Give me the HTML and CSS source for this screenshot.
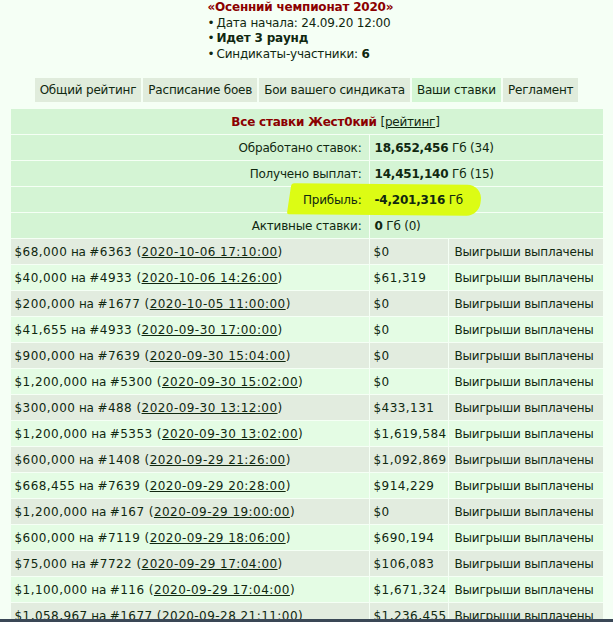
FILE: index.html
```html
<!DOCTYPE html>
<html lang="ru">
<head>
    <meta charset="UTF-8">
    <title>Ваши ставки</title>
    <link rel="stylesheet" href="styles.css">
</head>
<body>
    <div class="page">
        <div class="champ">
            <div class="champ-title">«Осенний чемпионат 2020»</div>
            <ul class="champ-info">
                <li>Дата начала: 24.09.20 12:00</li>
                <li><b>Идет 3 раунд</b></li>
                <li>Синдикаты-участники: <b>6</b></li>
            </ul>
        </div>

        <div class="tabs">
            <a class="tab">Общий рейтинг</a>
            <a class="tab">Расписание боев</a>
            <a class="tab">Бои вашего синдиката</a>
            <a class="tab active">Ваши ставки</a>
            <a class="tab">Регламент</a>
        </div>

        <table class="bets">
            <colgroup>
                <col class="c1">
                <col class="c2">
                <col class="c3">
            </colgroup>
            <tr class="head">
                <td colspan="3"><span class="owner">Все ставки Жест0кий</span> [<a href="#">рейтинг</a>]</td>
            </tr>
            <tr class="sum">
                <td class="label">Обработано ставок:</td>
                <td colspan="2"><b>18,652,456</b> Гб (34)</td>
            </tr>
            <tr class="sum">
                <td class="label">Получено выплат:</td>
                <td colspan="2"><b>14,451,140</b> Гб (15)</td>
            </tr>
            <tr class="sum profit">
                <td class="label"><span class="mark-wrap"><span class="marker"></span><span class="over">Прибыль:</span></span></td>
                <td colspan="2"><span class="over"><b>-4,201,316</b> Гб</span></td>
            </tr>
            <tr class="sum">
                <td class="label">Активные ставки:</td>
                <td colspan="2"><b>0</b> Гб (0)</td>
            </tr>
            <tbody id="bet-rows"></tbody>
        </table>
    </div>
    <div class="taskbar"></div>

    <script>
        const bets = [
            ['$68,000', '6363', '2020-10-06 17:10:00', '$0'],
            ['$40,000', '4933', '2020-10-06 14:26:00', '$61,319'],
            ['$200,000', '1677', '2020-10-05 11:00:00', '$0'],
            ['$41,655', '4933', '2020-09-30 17:00:00', '$0'],
            ['$900,000', '7639', '2020-09-30 15:04:00', '$0'],
            ['$1,200,000', '5300', '2020-09-30 15:02:00', '$0'],
            ['$300,000', '488', '2020-09-30 13:12:00', '$433,131'],
            ['$1,200,000', '5353', '2020-09-30 13:02:00', '$1,619,584'],
            ['$600,000', '1408', '2020-09-29 21:26:00', '$1,092,869'],
            ['$668,455', '7639', '2020-09-29 20:28:00', '$914,229'],
            ['$1,200,000', '167', '2020-09-29 19:00:00', '$0'],
            ['$600,000', '7119', '2020-09-29 18:06:00', '$690,194'],
            ['$75,000', '7722', '2020-09-29 17:04:00', '$106,083'],
            ['$1,100,000', '116', '2020-09-29 17:04:00', '$1,671,324'],
            ['$1,058,967', '1677', '2020-09-28 21:11:00', '$1,236,455']
        ];
        const body = document.getElementById('bet-rows');
        bets.forEach((b, i) => {
            const tr = document.createElement('tr');
            tr.className = i % 2 === 0 ? 'row odd' : 'row even';
            tr.innerHTML = `<td><span class="num">${b[0]}</span> на <span class="num">#${b[1]} (<a href="#">${b[2]}</a>)</span></td>` +
                `<td class="num">${b[3]}</td><td>Выигрыши выплачены</td>`;
            body.appendChild(tr);
        });
    </script>
</body>
</html>
```

FILE: styles.css
```css
/* Page */
html {
    overflow: hidden;
}

body {
    margin: 0;
    background-color: #f5fff5;
    font-family: "DejaVu Sans", Verdana, sans-serif;
    font-size: 12px;
    letter-spacing: -0.2px;
    color: #102810;
}

.page {
    width: 592px;
    margin: 0 auto;
}

/* Championship header */
.champ {
    padding-left: 197px;
    line-height: 15.5px;
}

.champ-title {
    color: #8b0000;
    font-weight: bold;
}

.champ-info {
    list-style: none;
    margin: 0;
    padding: 0;
}

.champ-info li::before {
    content: "\2022";
    display: inline-block;
    width: 9px;
}

/* Tabs */
.tabs {
    display: flex;
    justify-content: center;
    gap: 2px;
    margin-top: 16px;
    margin-bottom: 6px;
}

.tab {
    background-color: #e0ecdc;
    padding: 0 5px;
    height: 24px;
    line-height: 24px;
    color: #102810;
}

.tab.active {
    background-color: #d4f6d4;
}

/* Bets table */
.bets {
    width: 594px;
    margin-left: -1px;
    border-spacing: 1px;
    table-layout: fixed;
}

.bets .c1 { width: 358px; }
.bets .c2 { width: 78px; }

.bets td {
    height: 25px;
    padding: 0 4px;
    white-space: nowrap;
    overflow: hidden;
}

.bets a {
    color: #102810;
}

.head td {
    background-color: #d4f4d4;
    text-align: center;
    padding-left: 62px;
}

.owner {
    color: #8b0000;
    font-weight: bold;
}

.sum td {
    background-color: #d4f4d4;
    overflow: visible;
}

.sum .label {
    text-align: right;
    padding-right: 7px;
}

.sum td + td {
    padding-left: 5px;
}

.row.odd td {
    background-color: #e2ecdf;
}

.row.even td {
    background-color: #e4fce4;
}

.row td:nth-child(3) {
    padding-left: 6px;
}

.num {
    letter-spacing: 0.45px;
}

/* Highlighter stroke */
.mark-wrap {
    position: relative;
}

.marker {
    position: absolute;
    left: -14px;
    top: -9px;
    width: 192px;
    height: 31px;
    background-color: #dcfc14;
    border-radius: 3px 16px 12px 2px;
    transform: skewX(-8deg) rotate(0.5deg);
    z-index: 0;
}

.over {
    position: relative;
    z-index: 1;
}

.taskbar {
    position: fixed;
    left: 0;
    right: 0;
    bottom: 0;
    height: 3px;
    background-color: #3a4756;
}
```
